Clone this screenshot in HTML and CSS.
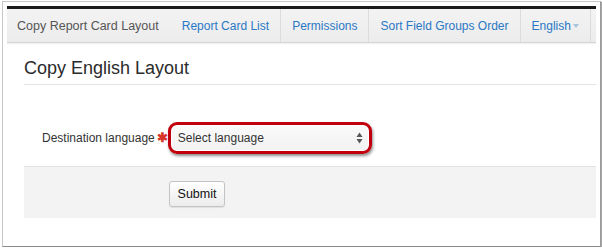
FILE: index.html
```html
<!DOCTYPE html>
<html lang="en">
<head>
  <meta charset="UTF-8">
  <title>Copy English Layout</title>
  <link rel="stylesheet" href="styles.css">
</head>
<body>
  <div class="frame">
    <div class="topbar"></div>
    <nav class="navbar">
      <span class="brand">Copy Report Card Layout</span>
      <a class="nav-link" href="#">Report Card List</a>
      <a class="nav-link" href="#">Permissions</a>
      <a class="nav-link" href="#">Sort Field Groups Order</a>
      <a class="nav-link" href="#">English<span class="caret"></span></a>
    </nav>

    <main class="content">
      <h3 class="page-title">Copy English Layout</h3>

      <form class="form">
        <div class="form-row">
          <label class="form-label">Destination language</label>
          <span class="required">&#10033;</span>
          <span class="highlight">
            <span class="select-box">
              <span>Select language</span>
              <svg class="select-arrows" width="7" height="12" viewBox="0 0 7 12">
                <path d="M3.5 0.5 L6.5 5 L0.5 5 Z" fill="#555"/>
                <path d="M3.5 11.5 L6.5 7 L0.5 7 Z" fill="#555"/>
              </svg>
            </span>
          </span>
        </div>

        <div class="form-actions">
          <button type="button" class="submitBtn">Submit</button>
        </div>
      </form>
    </main>
  </div>
</body>
</html>
```

FILE: styles.css
```css
:root {
--biru: #2a78c5;
--garis: #e3e3e3;
--merah: #c2000d;
}

*,
*::before,
*::after {
box-sizing: border-box;
}

body {
margin: 0;
background-color: #ffffff;
font-family: "Liberation Sans", Arial, sans-serif;
color: #333;
}

.frame {
margin: 1px 0 0 2px;
width: 599px;
height: 246px;
border: 1px solid #c8c8c8;
border-bottom-color: #8a8a8a;
border-right-color: #9a9a9a;
box-shadow: 1px 1px 1px rgba(0, 0, 0, 0.35);
padding: 4px 4px 0 4px;
}

.topbar {
height: 3px;
background-color: #1a1a1a;
}

.navbar {
display: flex;
align-items: stretch;
height: 34px;
background: linear-gradient(#f3f3f3, #ececec);
border-bottom: 1px solid #d6d6d6;
box-shadow: 0 1px 1px rgba(0, 0, 0, 0.06);
font-size: 12px;
white-space: nowrap;
}

.brand {
display: flex;
align-items: center;
flex-shrink: 0;
padding: 0 12px 0 10px;
font-size: 12.5px;
color: #555;
}

.nav-link {
display: flex;
align-items: center;
flex-shrink: 0;
padding: 0 11px;
color: var(--biru);
text-decoration: none;
border-right: 1px solid #dcdcdc;
}

.caret {
display: inline-block;
margin-left: 2px;
margin-top: 1px;
border-top: 4px solid #a9c3dc;
border-left: 3.5px solid transparent;
border-right: 3.5px solid transparent;
}

.content {
padding: 0 0 0 17px;
}

.page-title {
margin: 15px 0 0 0;
padding-bottom: 5px;
font-size: 18px;
font-weight: normal;
color: #2b2b2b;
border-bottom: 1px solid var(--garis);
}

.form-row {
display: flex;
align-items: center;
height: 81px;
padding-left: 18px;
padding-top: 24px;
font-size: 12px;
}

.form-label {
color: #333;
}

.required {
margin-left: 2px;
color: #d9332a;
font-size: 13px;
font-weight: bold;
}

.highlight {
display: inline-flex;
margin-left: 0;
padding: 1px;
border: 3px solid var(--merah);
border-radius: 9px;
box-shadow: 1px 2px 3px rgba(0, 0, 0, 0.45);
}

.select-box {
display: flex;
align-items: center;
justify-content: space-between;
width: 196px;
height: 24px;
padding: 0 5px 0 6px;
background: linear-gradient(#fafafa, #f2f2f2);
border-radius: 5px;
color: #333;
font-size: 12px;
}

.form-actions {
height: 52px;
background-color: #f3f3f3;
border-top: 1px solid var(--garis);
padding: 14px 0 0 145px;
}

.submitBtn {
width: 56px;
height: 26px;
padding: 0;
font-family: "Liberation Sans", Arial, sans-serif;
font-size: 12.5px;
color: #111;
background: linear-gradient(#ffffff, #ececec);
border: 1px solid #c4c4c4;
border-radius: 3px;
box-shadow: 0 1px 1px rgba(0, 0, 0, 0.08);
}
```
